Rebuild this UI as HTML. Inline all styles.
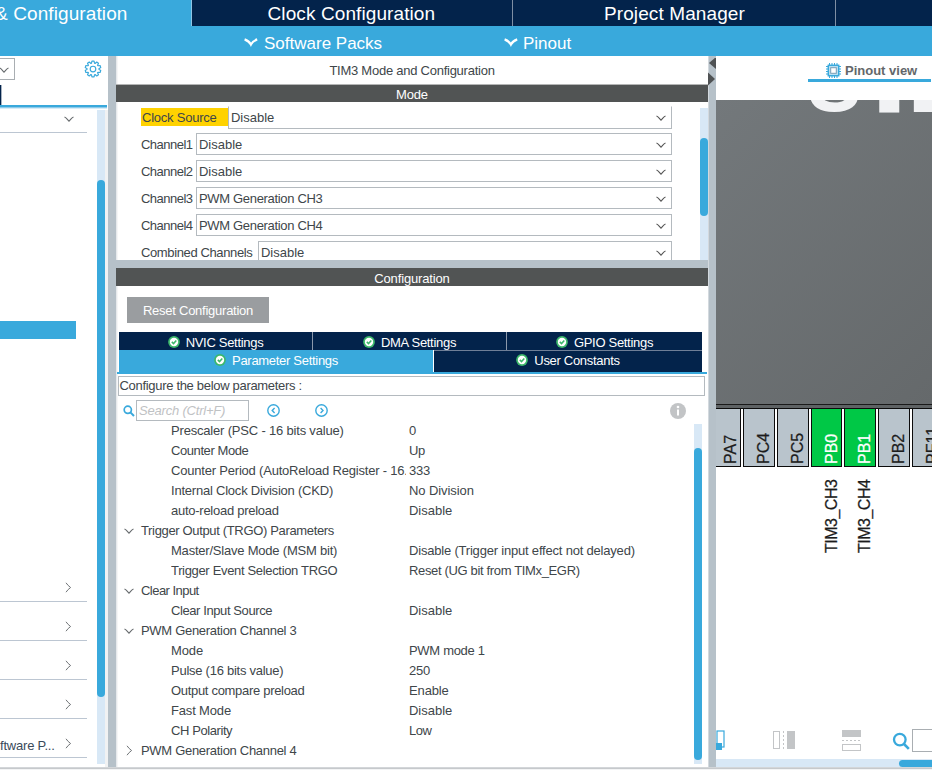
<!DOCTYPE html>
<html lang="en">
<head>
<meta charset="utf-8">
<title>TIM3 Mode and Configuration</title>
<style>
*{box-sizing:border-box;margin:0;padding:0}
html,body{width:932px;height:770px;overflow:hidden;background:#fff}
body{font-family:"Liberation Sans",sans-serif;font-size:13px;color:#40464a;position:relative}
.a{position:absolute}
.t{position:absolute;white-space:nowrap;line-height:1}
.navy{background:#03234b}
.blue{background:#39a9dc}
.w{color:#fff}
.split{background:#b6c1c9}
.bar{background:#515454;color:#fff;text-align:center;font-size:13px;letter-spacing:-0.15px}
.cb{position:absolute;border:1px solid #b4babf;background:#fff;height:22px}
.cb span{position:absolute;letter-spacing:-0.2px;left:2px;top:3px;font-size:13px;line-height:15px;white-space:nowrap}
.cb svg{position:absolute;right:5px;top:7.5px}
.lab{position:absolute;letter-spacing:-0.2px;font-size:13px;line-height:15px;white-space:nowrap}
.row{position:absolute;letter-spacing:-0.2px;height:20px;line-height:20px;font-size:13px;white-space:nowrap}
.tab{position:absolute;color:#fff;font-size:13px;text-align:center;white-space:nowrap;letter-spacing:-0.3px}
.sep{position:absolute;left:0;width:87px;height:1px;background:#bcc6d2}
.pin{position:absolute;border:1.3px solid #0c0c0c;background:#b9c4cc}
.pin.g{background:#00c846}
.pl{position:absolute;-webkit-text-stroke:0.25px;font-size:16px;line-height:1;white-space:nowrap;transform-origin:0 0;transform:rotate(-90deg)}
</style>
</head>
<body>
<!-- top tab bar -->
<div class="a navy" style="left:0;top:0;width:932px;height:26px"></div>
<div class="a blue" style="left:0;top:0;width:191px;height:26px"></div>
<div class="a blue" style="left:0;top:26px;width:932px;height:30px"></div>
<div class="a" style="left:512px;top:0;width:1px;height:26px;background:#7f8ea3"></div>
<div class="a" style="left:835px;top:0;width:1px;height:26px;background:#7f8ea3"></div>
<div class="t w" style="left:-5px;top:4px;font-size:19px;letter-spacing:0.1px">&amp; Configuration</div>
<div class="a" style="left:191px;top:0;width:1px;height:26px;background:#8fc5e4"></div>
<div class="t w" style="left:267.5px;top:4px;font-size:19px;letter-spacing:0.1px">Clock Configuration</div>
<div class="t w" style="left:604px;top:4px;font-size:19px;letter-spacing:0.1px">Project Manager</div>
<div class="t w" style="left:264px;top:35px;font-size:17px">Software Packs</div>
<div class="t w" style="left:523px;top:35px;font-size:17px">Pinout</div>
<svg class="a" style="left:243.7px;top:38px" width="14" height="9" viewBox="0 0 14 9"><path d="M0.6 1.4 Q5 3 6.9 6.6 Q8.8 3 13.2 1.4" fill="none" stroke="#fff" stroke-width="2.2"/></svg>
<svg class="a" style="left:503.7px;top:38px" width="14" height="9" viewBox="0 0 14 9"><path d="M0.6 1.4 Q5 3 6.9 6.6 Q8.8 3 13.2 1.4" fill="none" stroke="#fff" stroke-width="2.2"/></svg>
<!-- left panel -->
<div class="a" style="left:0;top:56px;width:108px;height:712px;background:#fff;overflow:hidden">
<div class="a" style="left:-10px;top:2px;width:25px;height:22px;border:1px solid #a9aeb2;background:#fff"></div>
<svg class="a" style="left:-1px;top:11px" width="10" height="7" viewBox="0 0 10 7"><path d="M0.5 1 C2.6 1.6 3.8 4.4 5 5.2 C6.2 4.4 7.4 1.6 9.5 1" fill="none" stroke="#666a6d" stroke-width="1.1" stroke-linejoin="round"/></svg>
<svg class="a" style="left:83px;top:3px" width="20" height="20" viewBox="-10 -10 20 20"><g fill="none" stroke="#39a9dc" stroke-width="1.15" stroke-linejoin="round"><path d="M-1.54 -5.70 L-1.09 -7.82 L1.09 -7.82 L1.54 -5.70 L2.10 -5.51 L3.72 -6.97 L5.48 -5.69 L4.59 -3.70 L4.94 -3.22 L7.11 -3.45 L7.78 -1.38 L5.89 -0.30 L5.89 0.30 L7.78 1.38 L7.11 3.45 L4.94 3.22 L4.59 3.70 L5.48 5.69 L3.72 6.97 L2.10 5.51 L1.54 5.70 L1.09 7.82 L-1.09 7.82 L-1.54 5.70 L-2.10 5.51 L-3.72 6.97 L-5.48 5.69 L-4.59 3.70 L-4.94 3.22 L-7.11 3.45 L-7.78 1.38 L-5.89 0.30 L-5.89 -0.30 L-7.78 -1.38 L-7.11 -3.45 L-4.94 -3.22 L-4.59 -3.70 L-5.48 -5.69 L-3.72 -6.97 L-2.10 -5.51 Z"/><circle r="2.8"/></g></svg>
<div class="a navy" style="left:0;top:29px;width:1px;height:20px"></div>
<div class="a navy" style="left:1px;top:29px;width:1px;height:20px;opacity:.35"></div>
<div class="a blue" style="left:0;top:49px;width:107px;height:2px"></div>
<div class="a" style="left:0;top:51px;width:107px;height:1px;background:#8ecbea"></div>
<div class="a" style="left:0;top:52px;width:107px;height:1px;background:#d7ecf7"></div>
<div class="a" style="left:97px;top:54px;width:8px;height:654px;background:#d8e8f6"></div>
<div class="a" style="left:105px;top:54px;width:3px;height:658px;background:#f1f2f3"></div>
<div class="a blue" style="left:97px;top:124px;width:8px;height:517px;border-radius:4px"></div>
<svg class="a" style="left:64px;top:60px" width="10" height="7" viewBox="0 0 10 7"><path d="M0.5 1 C2.6 1.6 3.8 4.4 5 5.2 C6.2 4.4 7.4 1.6 9.5 1" fill="none" stroke="#666a6d" stroke-width="1.1" stroke-linejoin="round"/></svg>
<div class="sep" style="top:76px"></div>
<div class="a blue" style="left:0;top:265px;width:76px;height:18px"></div>
<svg class="a" style="left:65px;top:526px" width="7" height="11" viewBox="0 0 7 11"><path d="M1 0.8 Q3 3.7 5.6 5.5 Q3 7.3 1 10.2" fill="none" stroke="#6e7275" stroke-width="1"/></svg>
<div class="sep" style="top:545px"></div>
<svg class="a" style="left:65px;top:565px" width="7" height="11" viewBox="0 0 7 11"><path d="M1 0.8 Q3 3.7 5.6 5.5 Q3 7.3 1 10.2" fill="none" stroke="#6e7275" stroke-width="1"/></svg>
<div class="sep" style="top:584px"></div>
<svg class="a" style="left:65px;top:604px" width="7" height="11" viewBox="0 0 7 11"><path d="M1 0.8 Q3 3.7 5.6 5.5 Q3 7.3 1 10.2" fill="none" stroke="#6e7275" stroke-width="1"/></svg>
<div class="sep" style="top:623px"></div>
<svg class="a" style="left:65px;top:643px" width="7" height="11" viewBox="0 0 7 11"><path d="M1 0.8 Q3 3.7 5.6 5.5 Q3 7.3 1 10.2" fill="none" stroke="#6e7275" stroke-width="1"/></svg>
<div class="sep" style="top:662px"></div>
<svg class="a" style="left:65px;top:682px" width="7" height="11" viewBox="0 0 7 11"><path d="M1 0.8 Q3 3.7 5.6 5.5 Q3 7.3 1 10.2" fill="none" stroke="#6e7275" stroke-width="1"/></svg>
<div class="sep" style="top:701px"></div>
<div class="t" style="left:0px;top:683px;font-size:13px;color:#3a4a5a;letter-spacing:-0.2px">ftware P...</div>
</div>
<div class="a split" style="left:108px;top:56px;width:8px;height:712px"></div>
<!-- middle panel -->
<div class="a" style="left:116px;top:56px;width:592px;height:712px;background:#fff;overflow:hidden">
<div class="a" style="left:0;top:0;width:1px;height:712px;background:#e6e9ec"></div>
<div class="a" style="left:1px;top:0;width:1px;height:712px;background:#f5f6f7"></div>
<div class="t" style="left:0;width:592px;text-align:center;top:8px;font-size:13px;letter-spacing:-0.25px">TIM3 Mode and Configuration</div>
<div class="a" style="left:0;top:28px;width:592px;height:1px;background:#b4b5b5"></div>
<div class="a bar" style="left:0;top:29px;width:592px;height:17px;line-height:19px">Mode</div>
<div class="a" style="left:25px;top:52px;width:88px;height:18px;background:#ffd200"></div>
<div class="lab" style="left:26px;top:54px;letter-spacing:-0.225px;">Clock Source</div>
<div class="cb" style="left:112px;top:50px;width:444px;border-top-color:transparent;height:23px"><span style="letter-spacing:-0.021px;">Disable</span><svg width="10" height="7" viewBox="0 0 10 7"><path d="M0.5 1 C2.6 1.6 3.8 4.4 5 5.2 C6.2 4.4 7.4 1.6 9.5 1" fill="none" stroke="#555" stroke-width="1.1"/></svg></div>
<div class="lab" style="left:25px;top:81px;letter-spacing:-0.518px;">Channel1</div>
<div class="cb" style="left:80px;top:77px;width:476px;"><span style="letter-spacing:-0.021px;">Disable</span><svg width="10" height="7" viewBox="0 0 10 7"><path d="M0.5 1 C2.6 1.6 3.8 4.4 5 5.2 C6.2 4.4 7.4 1.6 9.5 1" fill="none" stroke="#555" stroke-width="1.1"/></svg></div>
<div class="lab" style="left:25px;top:108px;letter-spacing:-0.518px;">Channel2</div>
<div class="cb" style="left:80px;top:104px;width:476px;"><span style="letter-spacing:-0.021px;">Disable</span><svg width="10" height="7" viewBox="0 0 10 7"><path d="M0.5 1 C2.6 1.6 3.8 4.4 5 5.2 C6.2 4.4 7.4 1.6 9.5 1" fill="none" stroke="#555" stroke-width="1.1"/></svg></div>
<div class="lab" style="left:25px;top:135px;letter-spacing:-0.518px;">Channel3</div>
<div class="cb" style="left:80px;top:131px;width:476px;"><span style="letter-spacing:-0.329px;">PWM Generation CH3</span><svg width="10" height="7" viewBox="0 0 10 7"><path d="M0.5 1 C2.6 1.6 3.8 4.4 5 5.2 C6.2 4.4 7.4 1.6 9.5 1" fill="none" stroke="#555" stroke-width="1.1"/></svg></div>
<div class="lab" style="left:25px;top:162px;letter-spacing:-0.518px;">Channel4</div>
<div class="cb" style="left:80px;top:158px;width:476px;"><span style="letter-spacing:-0.329px;">PWM Generation CH4</span><svg width="10" height="7" viewBox="0 0 10 7"><path d="M0.5 1 C2.6 1.6 3.8 4.4 5 5.2 C6.2 4.4 7.4 1.6 9.5 1" fill="none" stroke="#555" stroke-width="1.1"/></svg></div>
<div class="lab" style="left:25px;top:189px;letter-spacing:-0.375px;">Combined Channels</div>
<div class="cb" style="left:142px;top:185px;width:414px;"><span style="letter-spacing:-0.021px;">Disable</span><svg width="10" height="7" viewBox="0 0 10 7"><path d="M0.5 1 C2.6 1.6 3.8 4.4 5 5.2 C6.2 4.4 7.4 1.6 9.5 1" fill="none" stroke="#555" stroke-width="1.1"/></svg></div>
<div class="a" style="left:584px;top:52px;width:8px;height:153px;background:#d8e8f6"></div>
<div class="a blue" style="left:584px;top:82px;width:8px;height:78px;border-radius:4px"></div>
<div class="a split" style="left:0;top:204px;width:592px;height:8px"></div>
<div class="a bar" style="left:0;top:212px;width:592px;height:18px;line-height:21px">Configuration</div>
<div class="a" style="left:11px;top:241px;width:142px;height:26px;background:#9a9da0;color:#fff;font-size:13px;line-height:28px;letter-spacing:-0.25px;text-align:center">Reset Configuration</div>
<div class="a navy" style="left:3px;top:276px;width:583px;height:18px"></div>
<div class="tab" style="left:3px;top:276px;width:193px;height:18px;line-height:21px"><svg width="12" height="12" viewBox="-0.5 -0.5 12 12" style="vertical-align:-0.5px;margin-right:6px"><circle cx="5.5" cy="5.5" r="5.9" fill="#3db86b"/><circle cx="5.5" cy="5.5" r="4.2" fill="#fff"/><path d="M3.3 5.4 L5 7.1 L7.8 3.9" fill="none" stroke="#3db86b" stroke-width="1.5"/></svg>NVIC Settings</div>
<div class="tab" style="left:197px;top:276px;width:193px;height:18px;line-height:21px"><svg width="12" height="12" viewBox="-0.5 -0.5 12 12" style="vertical-align:-0.5px;margin-right:6px"><circle cx="5.5" cy="5.5" r="5.9" fill="#3db86b"/><circle cx="5.5" cy="5.5" r="4.2" fill="#fff"/><path d="M3.3 5.4 L5 7.1 L7.8 3.9" fill="none" stroke="#3db86b" stroke-width="1.5"/></svg>DMA Settings</div>
<div class="tab" style="left:391px;top:276px;width:195px;height:18px;line-height:21px"><svg width="12" height="12" viewBox="-0.5 -0.5 12 12" style="vertical-align:-0.5px;margin-right:6px"><circle cx="5.5" cy="5.5" r="5.9" fill="#3db86b"/><circle cx="5.5" cy="5.5" r="4.2" fill="#fff"/><path d="M3.3 5.4 L5 7.1 L7.8 3.9" fill="none" stroke="#3db86b" stroke-width="1.5"/></svg>GPIO Settings</div>
<div class="a" style="left:196px;top:276px;width:1px;height:18px;background:#8b98ab"></div>
<div class="a" style="left:390px;top:276px;width:1px;height:18px;background:#8b98ab"></div>
<div class="a blue" style="left:3px;top:294px;width:314px;height:22px"></div>
<div class="a navy" style="left:318px;top:295px;width:268px;height:21px"></div>
<div class="tab" style="left:3px;top:295px;width:314px;height:20px;line-height:19px"><svg width="12" height="12" viewBox="-0.5 -0.5 12 12" style="vertical-align:-1px;margin-right:6px"><circle cx="5.5" cy="5.5" r="5.9" fill="#3db86b"/><circle cx="5.5" cy="5.5" r="4.2" fill="#fff"/><path d="M3.3 5.4 L5 7.1 L7.8 3.9" fill="none" stroke="#3db86b" stroke-width="1.5"/></svg>Parameter Settings</div>
<div class="tab" style="left:318px;top:295px;width:268px;height:20px;line-height:19px"><svg width="12" height="12" viewBox="-0.5 -0.5 12 12" style="vertical-align:-1px;margin-right:6px"><circle cx="5.5" cy="5.5" r="5.9" fill="#3db86b"/><circle cx="5.5" cy="5.5" r="4.2" fill="#fff"/><path d="M3.3 5.4 L5 7.1 L7.8 3.9" fill="none" stroke="#3db86b" stroke-width="1.5"/></svg>User Constants</div>
<div class="a" style="left:318px;top:294px;width:268px;height:1px;background:#6f7f97"></div>
<div class="a blue" style="left:1px;top:316px;width:590px;height:2px"></div>
<div class="a" style="left:2px;top:320px;width:587px;height:20px;border:1px solid #b4babf"></div>
<div class="lab" style="left:3.5px;top:322px;letter-spacing:-0.31px;">Configure the below parameters :</div>
<svg class="a" style="left:7px;top:349px" width="12" height="12" viewBox="0 0 12 12"><circle cx="4.8" cy="4.8" r="3.6" fill="none" stroke="#39a9dc" stroke-width="1.7"/><path d="M7.4 7.4 L11 11" stroke="#39a9dc" stroke-width="2"/></svg>
<div class="a" style="left:20px;top:344px;width:113px;height:21px;border:1px solid #b4babf"></div>
<div class="lab" style="left:23px;top:347px;font-style:italic;color:#bfc2c4">Search (Ctrl+F)</div>
<svg class="a" style="left:150.8px;top:348px" width="13" height="13" viewBox="0 0 13 13"><circle cx="6.5" cy="6.5" r="5.7" fill="none" stroke="#39a9dc" stroke-width="1.4"/><path d="M7.6 4 L5.2 6.5 L7.6 9" fill="none" stroke="#39a9dc" stroke-width="1.4"/></svg>
<svg class="a" style="left:198.5px;top:348px" width="13" height="13" viewBox="0 0 13 13"><circle cx="6.5" cy="6.5" r="5.7" fill="none" stroke="#39a9dc" stroke-width="1.4"/><path d="M5.6 4 L8 6.5 L5.6 9" fill="none" stroke="#39a9dc" stroke-width="1.4"/></svg>
<svg class="a" style="left:554px;top:347px" width="16" height="16" viewBox="0 0 16 16"><circle cx="8" cy="8" r="8" fill="#c2c4c6"/><rect x="7" y="6.5" width="2" height="6" fill="#fff"/><circle cx="8" cy="4" r="1.3" fill="#fff"/></svg>
<div class="row" style="left:55px;top:365px;width:235px;overflow:hidden;letter-spacing:-0.187px;">Prescaler (PSC - 16 bits value)</div>
<div class="row" style="left:293px;top:365px;">0</div>
<div class="row" style="left:55px;top:385px;width:235px;overflow:hidden;letter-spacing:-0.423px;">Counter Mode</div>
<div class="row" style="left:293px;top:385px;letter-spacing:-0.288px;">Up</div>
<div class="row" style="left:55px;top:405px;width:235px;overflow:hidden;">Counter Period (AutoReload Register - 16...</div>
<div class="row" style="left:293px;top:405px;letter-spacing:-0.28px;">333</div>
<div class="row" style="left:55px;top:425px;width:235px;overflow:hidden;letter-spacing:-0.218px;">Internal Clock Division (CKD)</div>
<div class="row" style="left:293px;top:425px;letter-spacing:-0.081px;">No Division</div>
<div class="row" style="left:55px;top:445px;width:235px;overflow:hidden;letter-spacing:-0.262px;">auto-reload preload</div>
<div class="row" style="left:293px;top:445px;letter-spacing:-0.021px;">Disable</div>
<div class="row" style="left:25px;top:465px;letter-spacing:-0.344px;">Trigger Output (TRGO) Parameters</div>
<svg class="a" style="left:8px;top:471.5px" width="10" height="7" viewBox="0 0 10 7"><path d="M0.5 1 C2.6 1.6 3.8 4.4 5 5.2 C6.2 4.4 7.4 1.6 9.5 1" fill="none" stroke="#666a6d" stroke-width="1.1" stroke-linejoin="round"/></svg>
<div class="row" style="left:55px;top:485px;width:235px;overflow:hidden;letter-spacing:-0.212px;">Master/Slave Mode (MSM bit)</div>
<div class="row" style="left:293px;top:485px;letter-spacing:-0.198px;">Disable (Trigger input effect not delayed)</div>
<div class="row" style="left:55px;top:505px;width:235px;overflow:hidden;letter-spacing:-0.333px;">Trigger Event Selection TRGO</div>
<div class="row" style="left:293px;top:505px;letter-spacing:-0.346px;">Reset (UG bit from TIMx_EGR)</div>
<div class="row" style="left:25px;top:525px;letter-spacing:-0.538px;">Clear Input</div>
<svg class="a" style="left:8px;top:531.5px" width="10" height="7" viewBox="0 0 10 7"><path d="M0.5 1 C2.6 1.6 3.8 4.4 5 5.2 C6.2 4.4 7.4 1.6 9.5 1" fill="none" stroke="#666a6d" stroke-width="1.1" stroke-linejoin="round"/></svg>
<div class="row" style="left:55px;top:545px;width:235px;overflow:hidden;letter-spacing:-0.404px;">Clear Input Source</div>
<div class="row" style="left:293px;top:545px;letter-spacing:-0.021px;">Disable</div>
<div class="row" style="left:25px;top:565px;letter-spacing:-0.298px;">PWM Generation Channel 3</div>
<svg class="a" style="left:8px;top:571.5px" width="10" height="7" viewBox="0 0 10 7"><path d="M0.5 1 C2.6 1.6 3.8 4.4 5 5.2 C6.2 4.4 7.4 1.6 9.5 1" fill="none" stroke="#666a6d" stroke-width="1.1" stroke-linejoin="round"/></svg>
<div class="row" style="left:55px;top:585px;width:235px;overflow:hidden;letter-spacing:-0.13px;">Mode</div>
<div class="row" style="left:293px;top:585px;letter-spacing:-0.313px;">PWM mode 1</div>
<div class="row" style="left:55px;top:605px;width:235px;overflow:hidden;letter-spacing:-0.258px;">Pulse (16 bits value)</div>
<div class="row" style="left:293px;top:605px;letter-spacing:-0.28px;">250</div>
<div class="row" style="left:55px;top:625px;width:235px;overflow:hidden;letter-spacing:-0.308px;">Output compare preload</div>
<div class="row" style="left:293px;top:625px;letter-spacing:-0.13px;">Enable</div>
<div class="row" style="left:55px;top:645px;width:235px;overflow:hidden;letter-spacing:-0.16px;">Fast Mode</div>
<div class="row" style="left:293px;top:645px;letter-spacing:-0.021px;">Disable</div>
<div class="row" style="left:55px;top:665px;width:235px;overflow:hidden;letter-spacing:-0.414px;">CH Polarity</div>
<div class="row" style="left:293px;top:665px;letter-spacing:-0.48px;">Low</div>
<div class="row" style="left:25px;top:685px;letter-spacing:-0.298px;">PWM Generation Channel 4</div>
<svg class="a" style="left:9.5px;top:689px" width="7" height="11" viewBox="0 0 7 11"><path d="M1 0.8 Q3 3.7 5.6 5.5 Q3 7.3 1 10.2" fill="none" stroke="#6e7275" stroke-width="1"/></svg>
<div class="a" style="left:578px;top:368px;width:8px;height:340px;background:#d8e8f6"></div>
<div class="a blue" style="left:578px;top:392px;width:8px;height:312px;border-radius:4px"></div>
</div>
<div class="a split" style="left:708px;top:56px;width:8px;height:712px;border-left:1px solid #d3d9de"></div>
<svg class="a" style="left:708px;top:58px" width="8" height="28" viewBox="0 0 8 28"><path d="M8 -1 L1 5 L8 11 Z" fill="#4f5254"/><path d="M0 14.5 L7 21 L0 27.5 Z" fill="#4f5254"/></svg>
<!-- right panel -->
<div class="a" style="left:716px;top:56px;width:216px;height:712px;background:#fff;overflow:hidden">
<div class="t" style="left:129px;top:8px;font-size:13px;font-weight:bold;color:#63676a">Pinout view</div>
<div class="a blue" style="left:92px;top:23px;width:123px;height:3px"></div>
<svg class="a" style="left:110px;top:7px" width="15" height="15" viewBox="0 0 15 15"><rect x="2.3" y="2.3" width="10.4" height="10.4" fill="#bfe2f4" stroke="#39a9dc" stroke-width="1.5"/><rect x="4.7" y="4.7" width="5.6" height="5.6" fill="#fff" stroke="#7a9db3" stroke-width="1"/><path d="M3.5 0v2M6 0v2M8.5 0v2M11 0v2M3.5 13v2M6 13v2M8.5 13v2M11 13v2M0 3.5h2M0 6h2M0 8.5h2M0 11h2M13 3.5h2M13 6h2M13 8.5h2M13 11h2" stroke="#39a9dc" stroke-width="1"/></svg>
<div class="a" style="left:0;top:44px;width:216px;height:304px;background:linear-gradient(135deg,#73787b 0%,#65696b 100%)"></div>
<div class="a" style="left:0;top:348px;width:216px;height:5px;background:#5e6264;border-top:1px solid #1a1a1a;border-bottom:1px solid #0c0c0c"></div>
<div class="a" style="left:0;top:44px;width:216px;height:16px;overflow:hidden;font-weight:bold;font-size:87px;color:#f1f2f4"><div class="t" style="left:91.1px;top:-62.6px;transform-origin:0 0;transform:scaleX(0.94)">S</div><div class="t" style="left:130.5px;top:-61.6px;transform-origin:0 0;transform:scaleX(1.59)">T</div><div class="t" style="left:188.0px;top:-61.6px;transform-origin:0 0;transform:scaleX(1.7)">M</div></div>
<div class="pin" style="left:-6.35px;top:351.7px;width:31.7px;height:58.9px"></div>
<div class="pl" style="left:6.75px;top:407.5px;color:#1c1c1c">PA7</div>
<div class="pin" style="left:27.30px;top:351.7px;width:31.7px;height:58.9px"></div>
<div class="pl" style="left:40.40px;top:407.5px;color:#1c1c1c">PC4</div>
<div class="pin" style="left:60.95px;top:351.7px;width:31.7px;height:58.9px"></div>
<div class="pl" style="left:74.05px;top:407.5px;color:#1c1c1c">PC5</div>
<div class="pin g" style="left:94.60px;top:351.7px;width:31.7px;height:58.9px"></div>
<div class="pl" style="left:107.70px;top:407.5px;color:#fff">PB0</div>
<div class="pin g" style="left:128.25px;top:351.7px;width:31.7px;height:58.9px"></div>
<div class="pl" style="left:141.35px;top:407.5px;color:#fff">PB1</div>
<div class="pin" style="left:161.90px;top:351.7px;width:31.7px;height:58.9px"></div>
<div class="pl" style="left:175.00px;top:407.5px;color:#1c1c1c">PB2</div>
<div class="pin" style="left:195.55px;top:351.7px;width:31.7px;height:58.9px"></div>
<div class="pl" style="left:208.65px;top:407.5px;color:#1c1c1c">PF11</div>
<div class="pl" style="left:107.70px;top:496.5px;color:#1c1c1c;letter-spacing:-0.5px">TIM3_CH3</div>
<div class="pl" style="left:141.35px;top:496.5px;color:#1c1c1c;letter-spacing:-0.5px">TIM3_CH4</div>
<svg class="a" style="left:0;top:674px" width="10" height="21" viewBox="0 0 10 21"><rect x="1" y="1" width="7" height="16" fill="#fff" stroke="#39a9dc" stroke-width="1.2"/><rect x="0" y="13" width="6" height="7" fill="#39a9dc"/></svg>
<svg class="a" style="left:57px;top:675px" width="22" height="18" viewBox="0 0 22 18"><rect x="0.5" y="0.5" width="6" height="17" fill="#fff" stroke="#c3c5c7"/><path d="M10.5 0v18" stroke="#c3c5c7" stroke-dasharray="2 2"/><rect x="14" y="0" width="8" height="18" fill="#c3c5c7"/></svg>
<svg class="a" style="left:126px;top:674px" width="20" height="22" viewBox="0 0 20 22"><rect x="0" y="0" width="19" height="7" fill="#c3c5c7"/><path d="M0 10.5h20" stroke="#c3c5c7" stroke-dasharray="2 2"/><rect x="0.5" y="14.5" width="18" height="6" fill="#fff" stroke="#c3c5c7"/></svg>
<svg class="a" style="left:176px;top:676px" width="18" height="18" viewBox="0 0 18 18"><circle cx="7.8" cy="7.6" r="5.8" fill="none" stroke="#39a9dc" stroke-width="2.3"/><path d="M12 12 L16.8 16.8" stroke="#39a9dc" stroke-width="2.6"/></svg>
<div class="a" style="left:196px;top:673px;width:30px;height:23px;border:1px solid #a9aeb2;background:#fff"></div>
<div class="a" style="left:0;top:703px;width:216px;height:8px;background:#d8e8f6"></div>
<div class="a blue" style="left:183px;top:704px;width:50px;height:7px;border-radius:4px"></div>
</div>
<div class="a" style="left:0;top:767px;width:932px;height:1px;background:#d3d6d9"></div>
<div class="a" style="left:0;top:768px;width:932px;height:1px;background:#c6c9cc"></div>
<div class="a" style="left:0;top:769px;width:932px;height:1px;background:#f3f4f5"></div>
</body>
</html>
